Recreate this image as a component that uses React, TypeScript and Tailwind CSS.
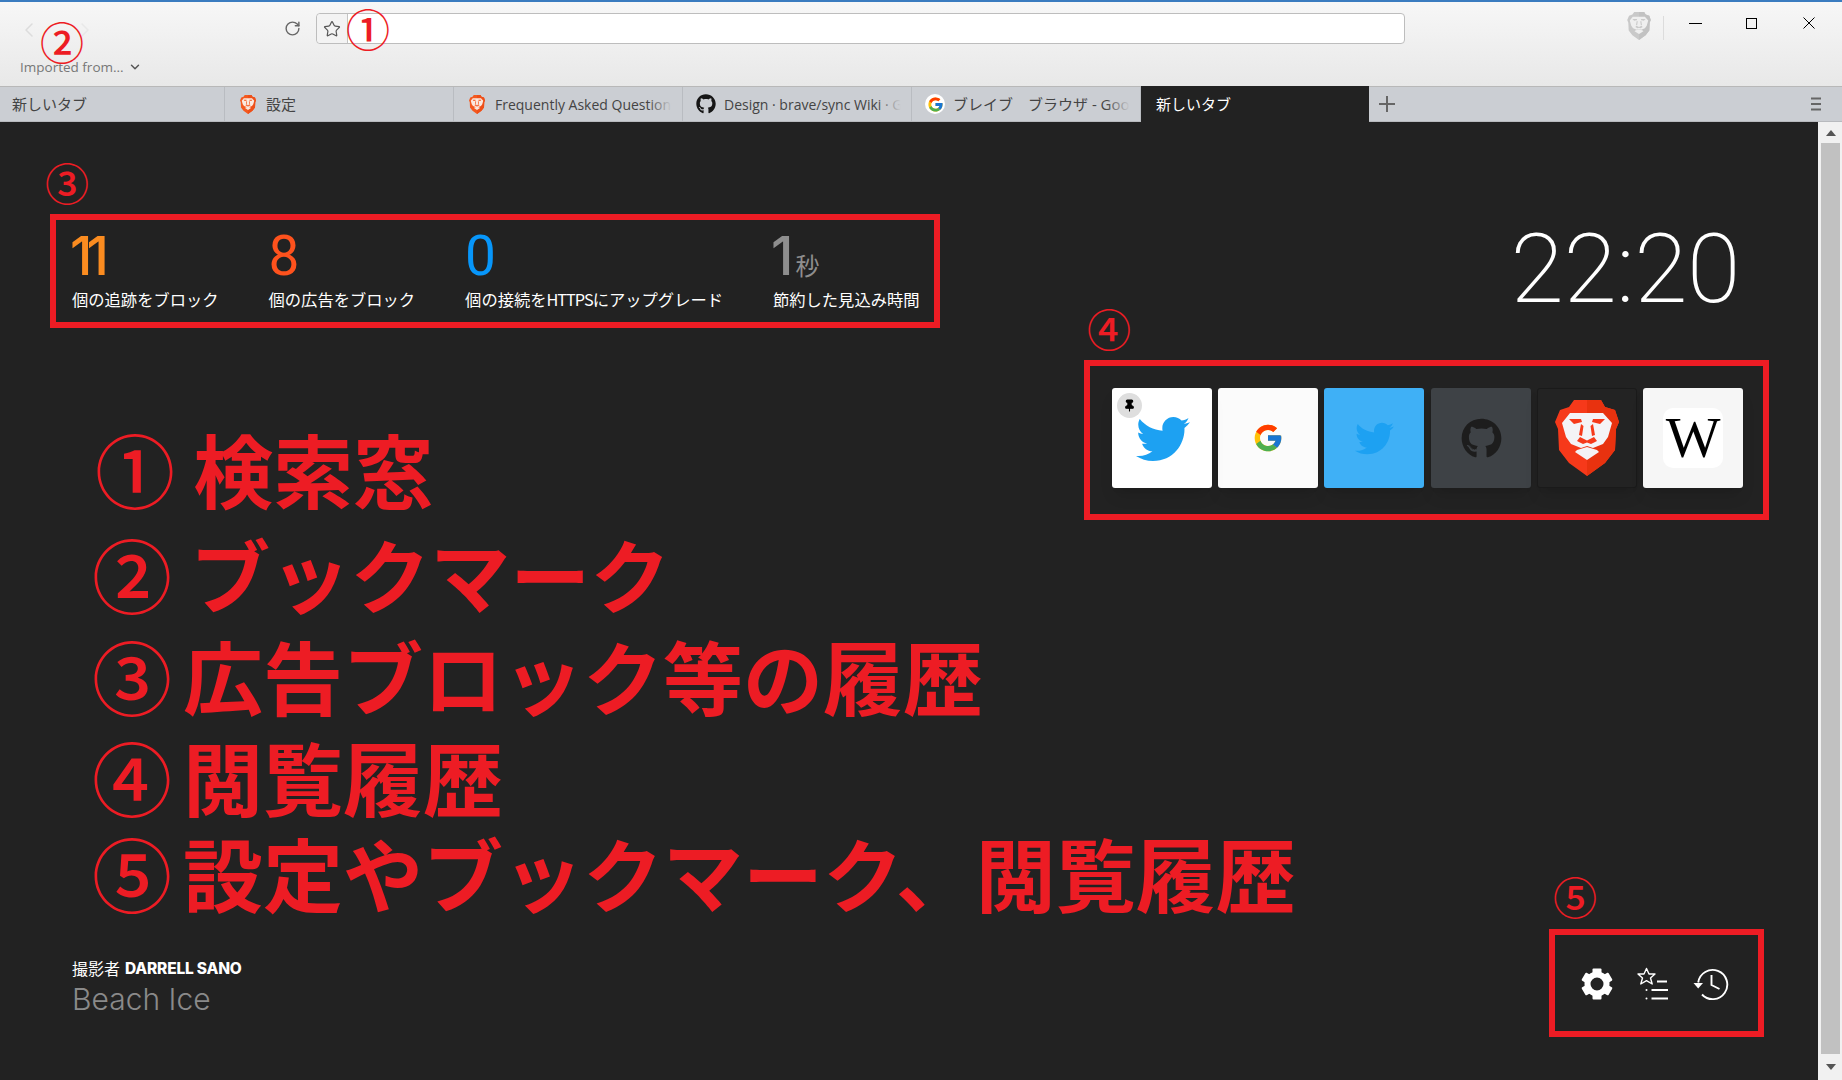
import React from "react";
import { RotateCw, Star, ChevronDown, ChevronLeft, ChevronRight, Pin } from "lucide-react";
import { FaTwitter, FaGithub } from "react-icons/fa";
import { FcGoogle } from "react-icons/fc";

function Lion({ className, shield = "#f6391a", dark = "#e8320f", face = "#f4f3f6" }: { className?: string; shield?: string; dark?: string; face?: string }) {
  return (
    <svg viewBox="0 0 64 76" className={className}>
      <path d="M19 0H46L50 7L60 10L64 22L61 29L60 50L50 63L32 76L14 63L4 50L3 29L0 22L5 10L14 7Z" fill={shield} />
      <path d="M32 0H46L50 7L60 10L64 22L61 29L60 50L50 63L32 76Z" fill={dark} />
      <path d="M15 13H48L57 23L53 37L48 44L38 48L32 46L26 48L16 44L11 37L7 23Z" fill={face} />
      <path d="M14 19L26 19L27 22L19 24Z M50 19L38 19L37 22L45 24Z M26 24L24 35L27 36L28.5 26Z M38 24L40 35L37 36L35.5 26Z M25 37L32 40.5L39 37L42 41L36 44L32 42.5L28 44L22 41Z" fill={shield} />
      <path d="M22 50L32 47L42 50L44 52L32 60L20 52Z" fill={face} />
    </svg>
  );
}

function Gear() {
  return (
    <svg viewBox="0 0 32 32" className="w-8 h-8">
      <circle cx="16" cy="16" r="9.5" fill="none" stroke="white" strokeWidth="6" />
      {[0, 60, 120, 180, 240, 300].map((a) => (
        <rect key={a} x="11.5" y="0.5" width="9" height="6" rx="1" fill="white" transform={`rotate(${a} 16 16)`} />
      ))}
    </svg>
  );
}

function StarList() {
  return (
    <svg viewBox="0 0 32 34" className="w-8 h-[34px]" fill="none" stroke="white">
      <path d="M9.5 1.5L12 7H18L13.5 11L15.2 17L9.5 13.6L3.8 17L5.5 11L1 7H7Z" strokeWidth="1.4" strokeLinejoin="round" />
      <path d="M20 14.5H30M14.5 23H31M14.5 31.5H31" strokeWidth="1.8" />
      <circle cx="9.5" cy="23" r="1" fill="white" stroke="none" />
      <circle cx="9.5" cy="31.5" r="1" fill="white" stroke="none" />
    </svg>
  );
}

function History() {
  return (
    <svg viewBox="0 0 36 33" className="w-9 h-[33px]" fill="none" stroke="white" strokeWidth="1.9">
      <path d="M5.2 14.5A14.6 14.6 0 1 1 9 26.5" />
      <path d="M0.5 15H10L5.2 20.5Z" fill="white" stroke="none" />
      <path d="M18.5 7V17L26.5 21" />
    </svg>
  );
}

const tabs = [
  { w: "w-[225px]", label: "新しいタブ", icon: null, size: "text-[15px]", pl: "pl-[12px]", fade: false },
  { w: "w-[229px]", label: "設定", icon: "brave", size: "text-[15px]", pl: "pl-[15px]", fade: false },
  { w: "w-[229px]", label: "Frequently Asked Questions", icon: "brave", size: "text-[14px]", pl: "pl-[15px]", fade: true },
  { w: "w-[229px]", label: "Design · brave/sync Wiki · GitHub", icon: "github", size: "text-[14px]", pl: "pl-[13px]", fade: true },
  { w: "w-[229px]", label: "ブレイブ　ブラウザ - Google 検索", icon: "google", size: "text-[15px]", pl: "pl-[13px]", fade: true },
];

const labelClass = "mt-[1px] text-[16.3px] leading-[24px] whitespace-nowrap font-['Noto_Sans_CJK_JP',sans-serif]";
const digitClass = "font-['Roboto',sans-serif] text-[55px] leading-[60px] h-[60px]";
const oneClass = "font-['Inter',sans-serif] text-[54px] leading-[60px] h-[60px] font-medium";

export default function App() {
  return (
    <div className="relative w-[1842px] h-[1080px] overflow-hidden flex flex-col bg-[#f0f0f0] font-['Open_Sans','Noto_Sans_CJK_JP',sans-serif]">
      {/* toolbar */}
      <div className="h-[86px] shrink-0 flex items-start bg-gradient-to-b from-[#f7f7f7] to-[#e8e8e8] border-t-2 border-t-[#3a7cc0]">
        <div className="w-[286px] shrink-0 flex flex-col pl-5 pt-[17px]">
          <div className="flex h-[22px] items-center gap-[32px] -ml-[3px]">
            <ChevronLeft className="w-6 h-6 text-[#dcdcdc]" strokeWidth={1.5} />
            <ChevronRight className="w-6 h-6 text-[#e8e8e8]" strokeWidth={1.5} />
          </div>
          <div className="flex items-center mt-[16px] text-[13.5px] leading-[20px] text-[#777]">
            <span>Imported from...</span>
            <ChevronDown className="w-[14px] h-[14px] ml-[4px] text-[#555]" strokeWidth={2.5} />
          </div>
        </div>
        <div className="w-[30px] shrink-0 pt-[18px] -ml-[2px] mr-[2px]">
          <RotateCw className="w-[17px] h-[17px] text-[#666]" strokeWidth={2} />
        </div>
        <div className="mt-[11px] w-[1089px] h-[31px] shrink-0 flex items-stretch bg-white border border-[#bdbdbd] rounded-[4px]">
          <div className="w-[31px] flex items-center justify-center bg-[#f3f3f3] border-r border-[#c4c4c4] rounded-l-[4px]">
            <Star className="w-[18px] h-[18px] text-[#555]" strokeWidth={1.6} />
          </div>
        </div>
        <div className="ml-[222px] mt-[10px] shrink-0">
          <Lion className="w-6 h-7" shield="#c9c9c9" dark="#c2c2c2" face="#efefef" />
        </div>
        <div className="ml-[12px] mt-[14px] w-px h-[24px] bg-[#dcdcdc] shrink-0" />
        <div className="ml-[25px] mt-[21px] w-[13px] h-px bg-black shrink-0" />
        <div className="ml-[44px] mt-[16px] w-[11px] h-[11px] border border-black shrink-0" />
        <svg viewBox="0 0 12 12" className="ml-[46px] mt-[15px] w-3 h-3 shrink-0" stroke="black" strokeWidth="1" fill="none">
          <path d="M0.5 0.5L11.5 11.5M11.5 0.5L0.5 11.5" />
        </svg>
      </div>

      {/* tab strip */}
      <div className="h-[36px] shrink-0 flex items-stretch bg-[#cbced3] border-t border-t-[#b8b8b8] border-b border-b-[#b8babe] text-[#444]">
        {tabs.map((t) => (
          <div key={t.label} className={`${t.w} ${t.size} ${t.pl} shrink-0 relative overflow-hidden flex items-center whitespace-nowrap border-r border-[#b9bcc1]`}>
            {t.icon === "brave" && <Lion className="w-[16px] h-[19px] shrink-0 mr-[10px]" shield="#f4591f" dark="#ee4f18" face="#fbe9df" />}
            {t.icon === "github" && <FaGithub className="w-5 h-5 shrink-0 mr-[8px] text-[#161616]" />}
            {t.icon === "google" && (
              <span className="w-5 h-5 shrink-0 mr-[8px] rounded-full bg-white flex items-center justify-center">
                <FcGoogle className="w-[17px] h-[17px]" />
              </span>
            )}
            <span>{t.label}</span>
            {t.fade && <div className="absolute right-0 top-0 bottom-0 w-[34px] bg-gradient-to-r from-[#cbced300] to-[#cbced3] to-70%" />}
          </div>
        ))}
        <div className="w-[228px] shrink-0 flex items-center pl-[15px] bg-[#222222] text-white text-[15px] -my-px">新しいタブ</div>
        <div className="flex-1 flex items-center justify-between pl-[10px] pr-[21px]">
          <svg viewBox="0 0 16 16" className="w-4 h-4" stroke="#666" strokeWidth="2"><path d="M8 0V16M0 8H16" /></svg>
          <svg viewBox="0 0 10 14" className="w-[10px] h-[14px]" stroke="#666" strokeWidth="2"><path d="M0 1.5H10M0 7H10M0 12.5H10" /></svg>
        </div>
      </div>

      {/* page */}
      <div className="flex-1 flex min-h-0">
        <main className="flex-1 bg-[#222222] flex flex-col justify-between pl-[72px] pr-[75px] pb-[63px] pt-[104px] text-white">
          <div className="flex justify-between items-start">
            <div className="flex gap-[50px]">
              <div className="flex flex-col">
                <div className={`${oneClass} text-[#fb8c20] tracking-[-6px] -ml-[2px]`}>11</div>
                <div className={labelClass}>個の追跡をブロック</div>
              </div>
              <div className="flex flex-col">
                <div className={`${digitClass} text-[#fe521d]`}>8</div>
                <div className={labelClass}>個の広告をブロック</div>
              </div>
              <div className="flex flex-col">
                <div className={`${digitClass} text-[#0796fa]`}>0</div>
                <div className={labelClass}>個の接続を<span className="tracking-[-1px]">HTTPS</span>にアップグレード</div>
              </div>
              <div className="flex flex-col">
                <div className={`${oneClass} text-[#8e8e8e] flex items-baseline -ml-[2px]`}>
                  1<span className="text-[24px] font-normal leading-none ml-[2px] font-['Noto_Sans_CJK_JP',sans-serif]">秒</span>
                </div>
                <div className={labelClass}>節約した見込み時間</div>
              </div>
            </div>
            <div className="flex flex-col items-end -mt-[12px]">
              <div className="font-['Roboto',sans-serif] font-extralight text-[97px] leading-[110px] pr-[3px] tracking-[-0.5px]">22:20</div>
              <div className="flex gap-[6px] mt-[64px]">
                <div className="relative w-[100px] h-[100px] rounded-[3px] bg-white shadow-lg flex items-center justify-center">
                  <span className="absolute left-[5px] top-[5px] w-[25px] h-[25px] rounded-full bg-[#dedede] flex items-center justify-center">
                    <Pin className="w-[13px] h-[13px] text-black fill-black" strokeWidth={2} />
                  </span>
                  <FaTwitter className="w-[54px] h-[54px] text-[#1da1f2] ml-[2px] mt-[2px]" />
                </div>
                <div className="w-[100px] h-[100px] rounded-[3px] bg-[#fbfbfb] shadow-lg flex items-center justify-center">
                  <FcGoogle className="w-[32px] h-[32px]" />
                </div>
                <div className="w-[100px] h-[100px] rounded-[3px] bg-[#3fb0f6] shadow-lg flex items-center justify-center">
                  <FaTwitter className="w-[39px] h-[39px] text-[#1da1f2]" />
                </div>
                <div className="ml-px w-[100px] h-[100px] rounded-[3px] bg-[#3e4246] shadow-lg flex items-center justify-center">
                  <FaGithub className="w-[41px] h-[41px] text-[#1d1d1d]" />
                </div>
                <div className="w-[100px] h-[100px] rounded-[3px] bg-[#232323] border border-[#1a1a1a] shadow-lg flex items-center justify-center">
                  <Lion className="w-[64px] h-[76px]" />
                </div>
                <div className="w-[100px] h-[100px] rounded-[3px] bg-[#f6f6f6] shadow-lg flex items-center justify-center">
                  <div className="w-[60px] h-[60px] rounded-[10px] bg-white flex items-center justify-center font-['Liberation_Serif',serif] text-[58px] leading-none text-black">W</div>
                </div>
              </div>
            </div>
          </div>
          <div className="flex justify-between items-end">
            <div className="flex flex-col">
              <div className="text-[16px] leading-[24px] flex items-center font-['Noto_Sans_CJK_JP',sans-serif]">
                撮影者<span className="ml-[5px] mt-[2px] font-['Inter',sans-serif] font-extrabold text-[15.5px] tracking-[-0.2px]">DARRELL SANO</span>
              </div>
              <div className="text-[#8a8a8a] font-['Inter',sans-serif] font-light text-[30px] leading-[36px]">Beach Ice</div>
            </div>
            <div className="flex items-center gap-[24px] pr-[14px] mb-[16px]">
              <Gear />
              <StarList />
              <History />
            </div>
          </div>
        </main>
        <div className="w-[24px] shrink-0 flex flex-col bg-[#f1f1f1] pr-[2px] pl-[3px]">
          <div className="h-[21px] flex items-center justify-center">
            <div className="w-0 h-0 border-l-[5px] border-r-[5px] border-b-[6px] border-l-transparent border-r-transparent border-b-[#555]" />
          </div>
          <div className="flex-1 bg-[#c1c1c1]" />
          <div className="h-[26px] flex items-center justify-center">
            <div className="w-0 h-0 border-l-[5px] border-r-[5px] border-t-[6px] border-l-transparent border-r-transparent border-t-[#555]" />
          </div>
        </div>
      </div>

      {/* red annotations laid over the screenshot */}
      <div className="absolute inset-0 pointer-events-none text-[#ed1c24] font-['Noto_Sans_CJK_JP',sans-serif] font-bold">
        <div className="absolute left-[50px] top-[214px] w-[890px] h-[114px] border-[6px] border-[#ed1c24]" />
        <div className="absolute left-[1084px] top-[360px] w-[685px] h-[160px] border-[6px] border-[#ed1c24]" />
        <div className="absolute left-[1549px] top-[929px] w-[215px] h-[108px] border-[6px] border-[#ed1c24]" />

        <span className="absolute left-[346px] top-[-4px] text-[44px] leading-[64px] font-medium">①</span>
        <span className="absolute left-[40px] top-[9px] text-[44px] leading-[64px] font-medium">②</span>
        <span className="absolute left-[45px] top-[150px] text-[44px] leading-[64px] font-medium">③</span>
        <span className="absolute left-[1087px] top-[296px] text-[44px] leading-[64px] font-medium">④</span>
        <span className="absolute left-[1553px] top-[864px] text-[44px] leading-[64px] font-medium">⑤</span>

        <div className="absolute left-[95px] top-[427px] text-[80px] leading-[80px] whitespace-nowrap"><span className="font-medium">①</span> 検索窓</div>
        <div className="absolute left-[92px] top-[532px] text-[80px] leading-[80px] whitespace-nowrap"><span className="font-medium">②</span> ブックマーク</div>
        <div className="absolute left-[92px] top-[634px] text-[80px] leading-[80px] whitespace-nowrap"><span className="font-medium mr-[11px]">③</span>広告ブロック等の履歴</div>
        <div className="absolute left-[92px] top-[735px] text-[80px] leading-[80px] whitespace-nowrap"><span className="font-medium mr-[11px]">④</span>閲覧履歴</div>
        <div className="absolute left-[92px] top-[831px] text-[80px] leading-[80px] whitespace-nowrap"><span className="font-medium mr-[11px]">⑤</span>設定やブックマーク、閲覧履歴</div>
      </div>
    </div>
  );
}
